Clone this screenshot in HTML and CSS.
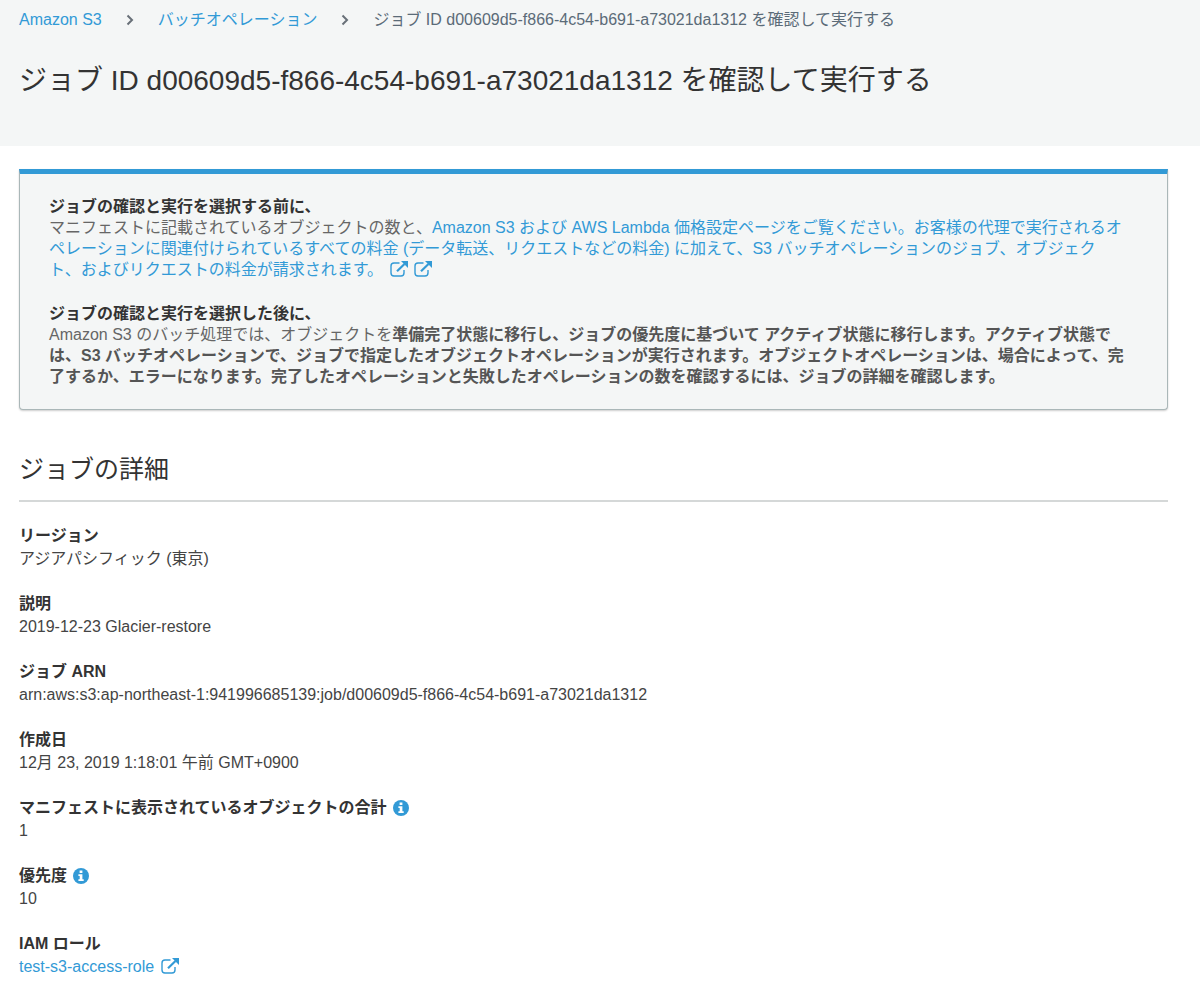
FILE: index.html
```html
<!DOCTYPE html>
<html lang="ja">
<head>
    <meta charset="UTF-8">
    <meta name="viewport" content="width=device-width, initial-scale=1.0">
    <title>S3 バッチオペレーション</title>
    <link rel="stylesheet" href="styles.css">
</head>

<body>
    <!-- Icons -->
    <svg class="sprite" aria-hidden="true">
        <symbol id="external" viewBox="0 0 18 16">
            <path d="M9.5 2H4Q1 2 1 5v7q0 3 3 3h7q3 0 3-3V9" fill="none" stroke="currentColor" stroke-width="1.4"/>
            <path d="M7 10.2 14.5 3" fill="none" stroke="currentColor" stroke-width="2.2"/>
            <path d="M11 0h7v7z" fill="currentColor"/>
        </symbol>
        <symbol id="info" viewBox="0 0 16 16">
            <circle cx="8" cy="8" r="8" fill="currentColor"/>
            <path d="M6.6 2.6h2.8v2.3H6.6zM5.4 6.3h4v5h1.3v1.8H5.4v-1.8h1.3V8.1H5.4z" fill="#fff"/>
        </symbol>
    </svg>

    <header class="page-header">
        <nav class="breadcrumb">
            <a href="#">Amazon S3</a>
            <svg class="chevron" viewBox="0 0 8 12"><path d="M1.5 1.5 6 6 1.5 10.5"/></svg>
            <a href="#">バッチオペレーション</a>
            <svg class="chevron" viewBox="0 0 8 12"><path d="M1.5 1.5 6 6 1.5 10.5"/></svg>
            <span>ジョブ ID d00609d5-f866-4c54-b691-a73021da1312 を確認して実行する</span>
        </nav>
        <h1>ジョブ ID d00609d5-f866-4c54-b691-a73021da1312 を確認して実行する</h1>
    </header>

    <main>
        <!-- Notice -->
        <section class="notice">
            <div>
                <h3>ジョブの確認と実行を選択する前に、</h3>
                <p>マニフェストに記載されているオブジェクトの数と、<a href="#">Amazon S3 および AWS Lambda 価格設定ページをご覧ください。お客様の代理で実行されるオペレーションに関連付けられているすべての料金 (データ転送、リクエストなどの料金) に加えて、S3 バッチオペレーションのジョブ、オブジェク<br>ト、およびリクエストの料金が請求されます。 <svg class="external"><use href="#external"/></svg></a> <a href="#" aria-label="AWS Lambda"><svg class="external"><use href="#external"/></svg></a></p>
            </div>
            <div>
                <h3>ジョブの確認と実行を選択した後に、</h3>
                <p>Amazon S3 のバッチ処理では、オブジェクトを<b>準備完了状態に移行し、ジョブの優先度に基づいて アクティブ状態に移行します。アクティブ状態では、S3 バッチオペレーションで、ジョブで指定したオブジェクトオペレーションが実行されます。オブジェクトオペレーションは、場合によって、完了するか、エラーになります。完了したオペレーションと失敗したオペレーションの数を確認するには、ジョブの詳細を確認します。</b></p>
            </div>
        </section>

        <!-- Job details -->
        <h2>ジョブの詳細</h2>
        <dl class="details">
            <div>
                <dt>リージョン</dt>
                <dd>アジアパシフィック (東京)</dd>
            </div>
            <div>
                <dt>説明</dt>
                <dd>2019-12-23 Glacier-restore</dd>
            </div>
            <div>
                <dt>ジョブ ARN</dt>
                <dd>arn:aws:s3:ap-northeast-1:941996685139:job/d00609d5-f866-4c54-b691-a73021da1312</dd>
            </div>
            <div>
                <dt>作成日</dt>
                <dd>12月 23, 2019 1:18:01 午前 GMT+0900</dd>
            </div>
            <div>
                <dt>マニフェストに表示されているオブジェクトの合計 <button type="button" class="info" aria-label="情報"><svg><use href="#info"/></svg></button></dt>
                <dd>1</dd>
            </div>
            <div>
                <dt>優先度 <button type="button" class="info" aria-label="情報"><svg><use href="#info"/></svg></button></dt>
                <dd>10</dd>
            </div>
            <div>
                <dt>IAM ロール</dt>
                <dd><a href="#">test-s3-access-role <svg class="external"><use href="#external"/></svg></a></dd>
            </div>
        </dl>
    </main>
</body>
</html>
```

FILE: styles.css
```css
* {
    margin: 0;
    padding: 0;
    box-sizing: border-box;
}

body {
    font-family: "Liberation Sans", "Noto Sans CJK JP", sans-serif;
    font-size: 16px;
    line-height: 21px;
    color: #444;
    background-color: #fff;
}

a {
    color: #329ad6;
    text-decoration: none;
}

a:hover {
    text-decoration: underline;
}

.sprite {
    display: none;
}

/* Header */
.page-header {
    min-height: 146px;
    padding: 9px 32px 40px 19px;
    background-color: #f4f6f6;
}

.breadcrumb {
    display: flex;
    flex-wrap: wrap;
    align-items: center;
    column-gap: 24px;
    color: #5b6b78;
}

.chevron {
    width: 8px;
    height: 12px;
    fill: none;
    stroke: #687078;
    stroke-width: 2;
}

h1 {
    margin-top: 32px;
    font-size: 28px;
    font-weight: normal;
    line-height: 38px;
    color: #333;
}

main {
    padding: 23px 32px 16px 19px;
}

/* Notice */
.notice {
    display: grid;
    gap: 23px;
    padding: 22px 32px 22px 29px;
    background-color: #f4f6f6;
    border: 1px solid #aab7b8;
    border-top: 5px solid #329ad6;
    border-radius: 0 0 4px 4px;
    box-shadow: 0 1px 2px rgba(0, 0, 0, 0.2);
    color: #666;
}

.notice h3 {
    font-size: 16px;
    color: #333;
}

.notice b {
    color: #555;
}

.external {
    width: 18px;
    height: 16px;
    margin-left: 2px;
    vertical-align: -2px;
}

/* Job details */
h2 {
    margin-top: 41px;
    padding-bottom: 12px;
    border-bottom: 2px solid #d5d8d8;
    font-size: 25px;
    font-weight: normal;
    line-height: 37px;
    color: #333;
}

.details {
    display: grid;
    gap: 22px;
    margin-top: 22px;
    line-height: 23px;
}

.details dt {
    font-weight: bold;
    color: #333;
}

.info {
    width: 16px;
    height: 16px;
    margin-left: 2px;
    border: none;
    background: none;
    color: #329ad6;
    vertical-align: -3px;
    cursor: pointer;
}

.info svg {
    display: block;
    width: 16px;
    height: 16px;
}
```
